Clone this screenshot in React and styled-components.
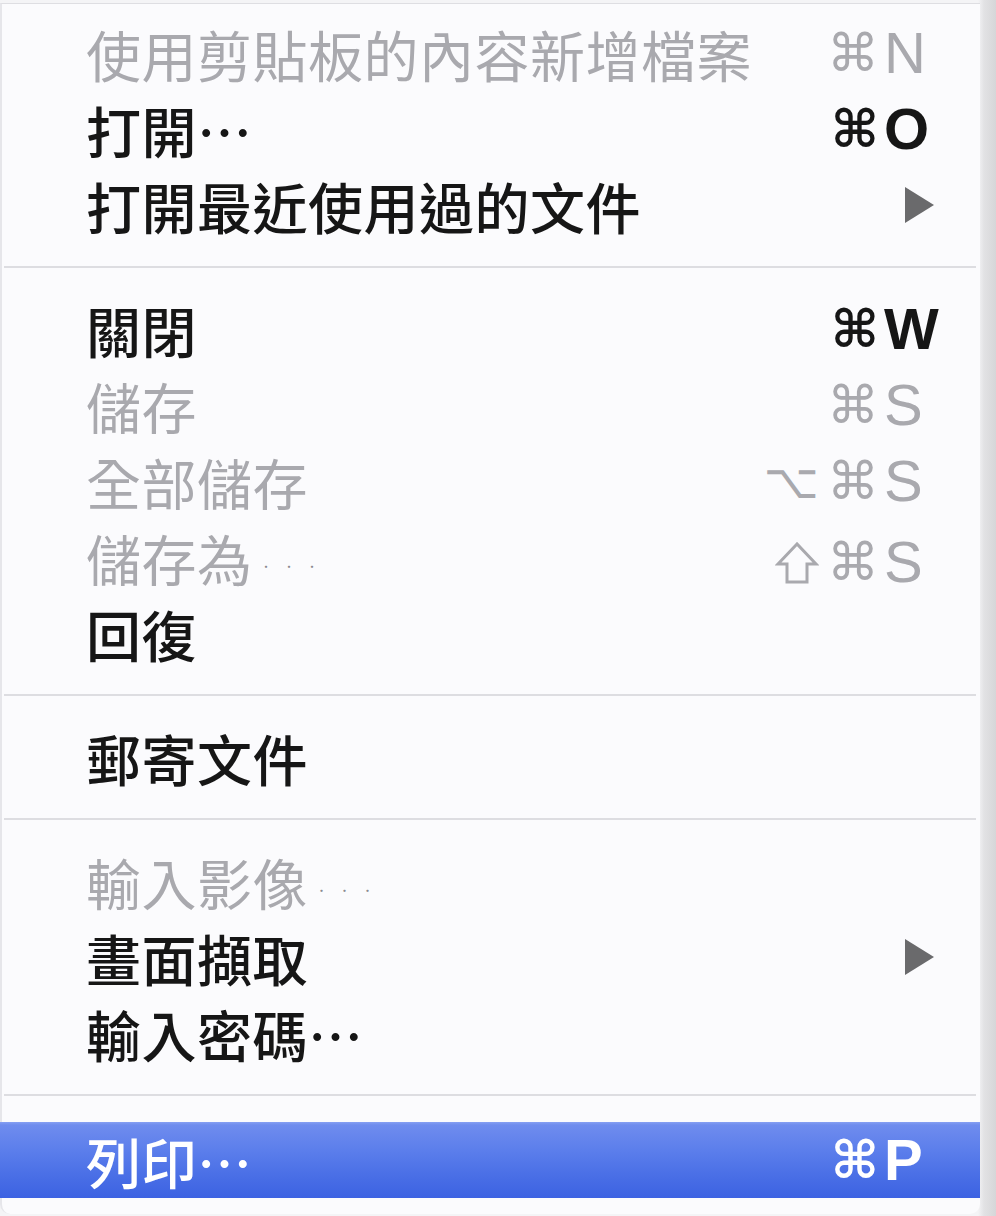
import React from "react";
import styled, { createGlobalStyle, css } from "styled-components";

const Global = createGlobalStyle`
  html, body { margin: 0; padding: 0; }
  body {
    background: linear-gradient(to right, #f4f4f6 0, #f4f4f6 978px, #e2e2e4 984px, #d6d6d8 996px);
    width: 996px;
    height: 1216px;
    overflow: hidden;
    font-family: "Noto Sans CJK TC", "Noto Sans CJK SC", sans-serif;
  }
`;

const Menu = styled.div`
  box-sizing: border-box;
  margin-top: 3px;
  width: 980px;
  height: 1211px;
  background: #fbfbfd;
  border-top: 1px solid #dedee2;
  border-left: 2px solid #e6e6ea;
  border-radius: 0 0 10px 10px;
  padding: 11px 0 16px;
  display: flex;
  flex-direction: column;
`;

const Row = styled.div`
  box-sizing: border-box;
  height: 76px;
  padding: 0 44px 0 84px;
  display: grid;
  grid-template-columns: 1fr auto 52px;
  align-items: center;
  color: ${(p) => (p.$disabled ? "#a9a9ae" : "#161616")};
  ${(p) =>
    p.$active &&
    css`
      color: #ffffff;
      margin-top: 3px;
      margin-left: -2px;
      padding-left: 86px;
      background: linear-gradient(
        to bottom,
        #86a0f2 0,
        #6f8cee 3px,
        #5a7deb 40%,
        #4a6fe6 70%,
        #3c62e2 100%
      );
    `}
`;

const Label = styled.span`
  font-family: "Noto Sans CJK TC", sans-serif;
  font-size: 55px;
  line-height: 76px;
  font-weight: ${(p) => (p.$disabled ? 400 : 500)};
  white-space: nowrap;
  letter-spacing: 0.5px;
`;

const Ellipsis = styled.span`
  font-size: ${(p) => (p.$tiny ? "11px" : "55px")};
  letter-spacing: ${(p) => (p.$tiny ? "12px" : "0")};
  margin-left: ${(p) => (p.$tiny ? "8px" : "0")};
  vertical-align: ${(p) => (p.$tiny ? "middle" : "baseline")};
  color: ${(p) => (p.$tiny ? "#8a8a90" : "inherit")};
`;

const Mods = styled.span`
  justify-self: end;
  display: flex;
  align-items: center;
  gap: 8px;
  padding-right: 5px;
  height: 76px;
`;

const ModGlyph = styled.span`
  font-family: "DejaVu Sans", sans-serif;
  font-size: ${(p) => (p.$wide ? "48px" : "52px")};
  line-height: 76px;
  font-weight: ${(p) => (p.$bold ? 700 : 400)};
  white-space: nowrap;
`;

const ShiftIcon = styled.svg`
  width: 44px;
  height: 44px;
  margin-top: 2px;
`;

const Key = styled.span`
  justify-self: start;
  font-family: "Liberation Sans", "DejaVu Sans", sans-serif;
  font-size: 58px;
  line-height: 76px;
  font-weight: ${(p) => (p.$bold ? 700 : 400)};
`;

const Arrow = styled.svg`
  justify-self: end;
  margin-right: 1px;
  width: 31px;
  height: 38px;
`;

const Separator = styled.div`
  height: 48px;
  display: flex;
  align-items: center;
  &::after {
    content: "";
    flex: 1;
    height: 2px;
    margin: 0 4px 0 2px;
    background: #dddde1;
  }
`;

const items = [
  { label: "使用剪貼板的內容新增檔案", disabled: true, mods: ["⌘"], key: "N" },
  { label: "打開", dots: true, mods: ["⌘"], key: "O" },
  { label: "打開最近使用過的文件", sub: true },
  { sep: true },
  { label: "關閉", mods: ["⌘"], key: "W" },
  { label: "儲存", disabled: true, mods: ["⌘"], key: "S" },
  { label: "全部儲存", disabled: true, mods: ["⌥", "⌘"], key: "S" },
  { label: "儲存為", disabled: true, dots: true, mods: ["⇧", "⌘"], key: "S" },
  { label: "回復" },
  { sep: true },
  { label: "郵寄文件" },
  { sep: true },
  { label: "輸入影像", disabled: true, dots: true },
  { label: "畫面擷取", sub: true },
  { label: "輸入密碼", dots: true },
  { sep: true },
  { label: "列印", dots: true, mods: ["⌘"], key: "P", active: true },
];

export default function App() {
  return (
    <>
      <Global />
      <Menu>
        {items.map((it, i) =>
          it.sep ? (
            <Separator key={i} />
          ) : (
            <Row key={i} $disabled={it.disabled} $active={it.active}>
              <Label $disabled={it.disabled}>
                {it.label}
                {it.dots && (
                  <Ellipsis $tiny={it.disabled}>{it.disabled ? "···" : "…"}</Ellipsis>
                )}
              </Label>
              <Mods>
                {(it.mods || []).map((m, j) =>
                  m === "⇧" ? (
                    <ShiftIcon key={j} viewBox="0 0 44 44" aria-label="⇧">
                      <polygon
                        points="22,3 3,23 12,23 12,41 32,41 32,23 41,23"
                        fill="none"
                        stroke="currentColor"
                        strokeWidth="3"
                        strokeLinejoin="miter"
                      />
                    </ShiftIcon>
                  ) : (
                    <ModGlyph key={j} $wide={m === "⌥"} $bold={!it.disabled}>
                      {m}
                    </ModGlyph>
                  )
                )}
              </Mods>
              {it.sub ? (
                <Arrow viewBox="0 0 31 38">
                  <polygon points="1,1 30,19 1,37" fill="#6a6a6c" />
                </Arrow>
              ) : (
                <Key $bold={!it.disabled}>{it.key || ""}</Key>
              )}
            </Row>
          )
        )}
      </Menu>
    </>
  );
}
